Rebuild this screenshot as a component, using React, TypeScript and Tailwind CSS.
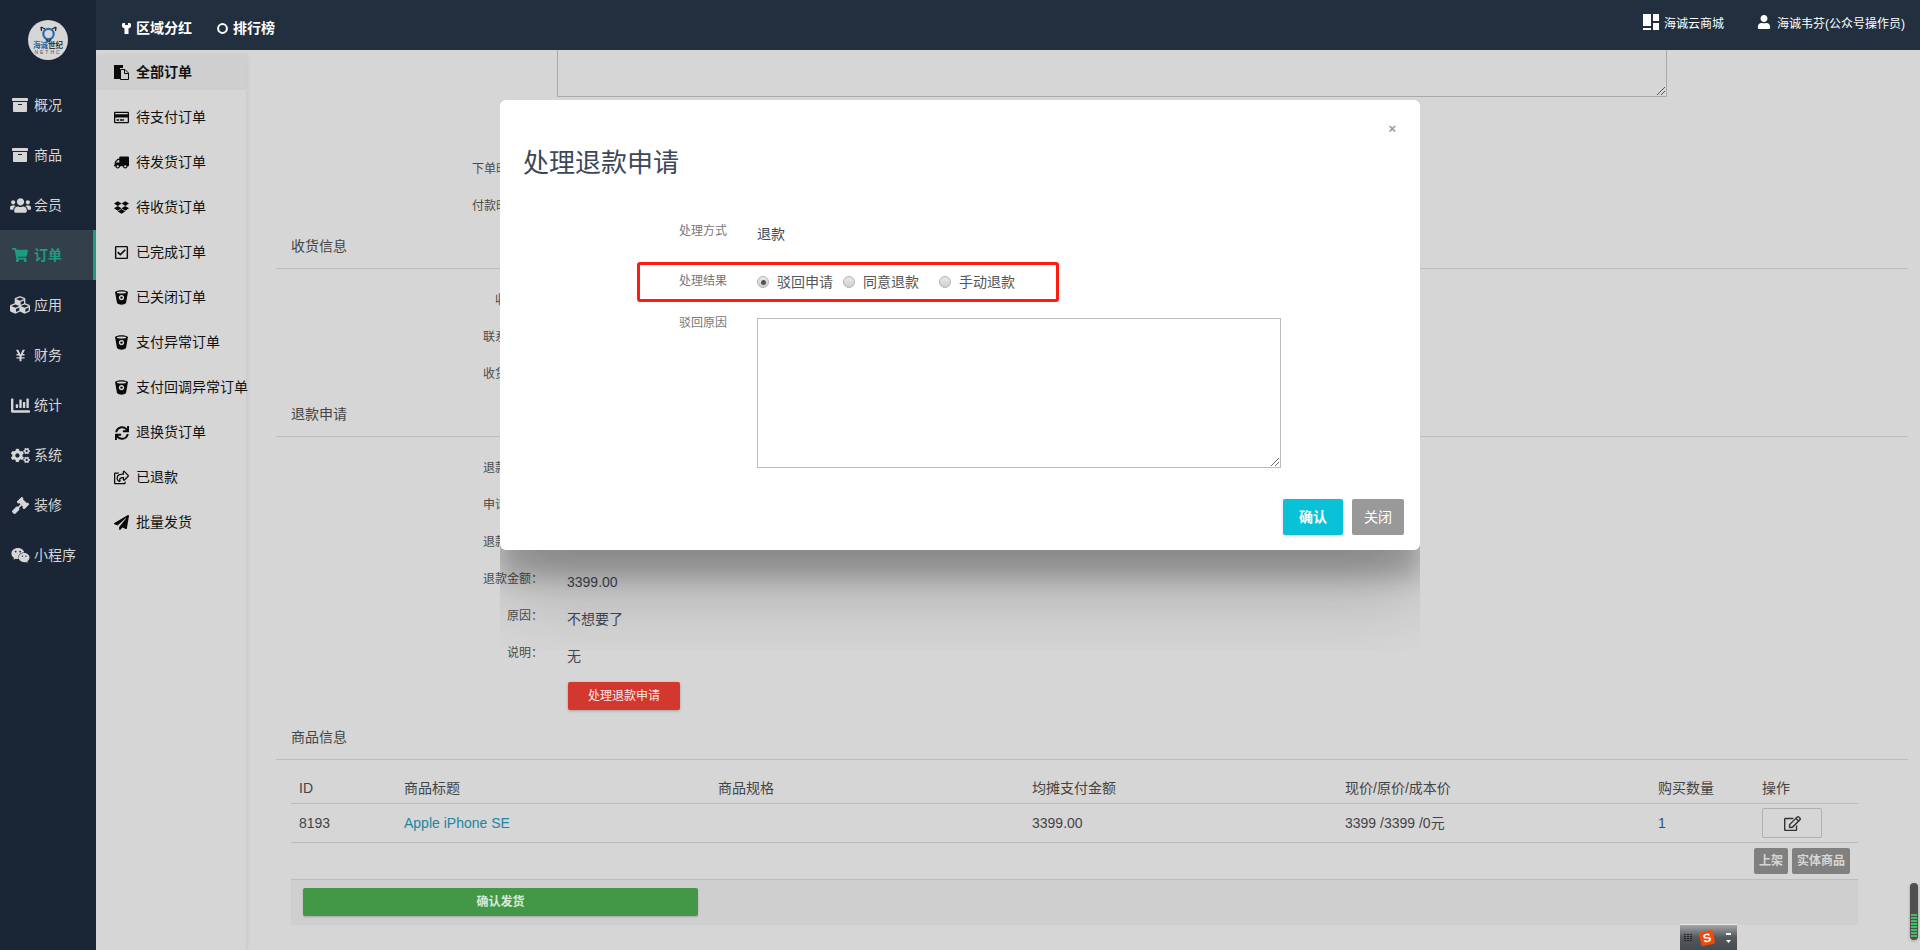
import React from "react";
import {
  FaArchive, FaUsers, FaShoppingCart, FaCubes, FaYenSign, FaChartBar, FaCogs, FaGavel, FaWeixin, FaUser,
  FaRegCreditCard, FaTruck, FaDropbox, FaRegCheckSquare, FaSync, FaRegShareSquare, FaPaperPlane, FaRegEdit,
} from "react-icons/fa";

const font = "font-['Liberation_Sans','Noto_Sans_CJK_SC',sans-serif]";

type IconType = React.ComponentType<{ size?: number; color?: string; className?: string }>;

function CopyIcon({ size = 15 }: { size?: number }) {
  return (
    <svg width={size} height={size} viewBox="0 0 15 15">
      <path d="M0 0 H9 V3 H6 V14 H0 Z" fill="#0a0a0a" />
      <path d="M6.5 4.5 H11 L14.5 8 V14.5 H6.5 Z" fill="none" stroke="#0a0a0a" strokeWidth="1" />
      <path d="M10.5 4.5 V8.5 H14.5" fill="none" stroke="#0a0a0a" strokeWidth="1" />
    </svg>
  );
}

function BucketIcon({ size = 15 }: { size?: number }) {
  return (
    <svg width={size} height={size} viewBox="0 0 14 15">
      <path d="M0.5 2 C3 -0.2 11 -0.2 13.5 2 L11.5 13 C9.5 15.3 4.5 15.3 2.5 13 Z" fill="#0a0a0a" />
      <ellipse cx="7" cy="2.6" rx="4.6" ry="1" fill="#d6d6d6" />
      <circle cx="7" cy="7.6" r="2.6" fill="#d6d6d6" />
      <circle cx="7" cy="7.6" r="1.2" fill="#0a0a0a" />
    </svg>
  );
}

function FlippedTruck({ size = 15 }: { size?: number }) {
  return <FaTruck size={size} color="#0a0a0a" className="-scale-x-100" />;
}

function SmallSync({ color }: { size?: number; color?: string }) {
  return <FaSync size={14} color={color} />;
}

const mainNav: [IconType, string, number][] = [
  [FaArchive, "概况", 16], [FaArchive, "商品", 16], [FaUsers, "会员", 21], [FaShoppingCart, "订单", 16], [FaCubes, "应用", 20],
  [FaYenSign, "财务", 13], [FaChartBar, "统计", 19], [FaCogs, "系统", 19], [FaGavel, "装修", 17], [FaWeixin, "小程序", 19],
];

const subNav: [IconType, string][] = [
  [CopyIcon, "全部订单"], [FaRegCreditCard, "待支付订单"], [FlippedTruck, "待发货订单"], [FaDropbox, "待收货订单"],
  [FaRegCheckSquare, "已完成订单"], [BucketIcon, "已关闭订单"], [BucketIcon, "支付异常订单"], [BucketIcon, "支付回调异常订单"],
  [SmallSync, "退换货订单"], [FaRegShareSquare, "已退款"], [FaPaperPlane, "批量发货"],
];

function Logo() {
  return (
    <div className="w-10 h-10 rounded-full bg-[#d6d6d6] flex flex-col items-center overflow-hidden">
      <svg width="17" height="16" viewBox="0 0 17 16" className="mt-[6px] shrink-0">
        <circle cx="8.5" cy="8" r="5.2" fill="none" stroke="#2a6db0" strokeWidth="2.2" />
        <path d="M1 1 L5 3 M16 1 L12 3 M1 1 L1.5 5 M16 1 L15.5 5 M8.5 15.5 L6 13.5 M8.5 15.5 L11 13.5" stroke="#222" strokeWidth="1.3" fill="none" />
      </svg>
      <div className="text-[7.5px] leading-[8px] font-bold whitespace-nowrap">
        <span className="text-[#2a5f99]">海诚</span><span className="text-[#333]">世纪</span>
      </div>
      <div className="text-[5px] leading-[5px] tracking-[2px] text-[#555] whitespace-nowrap">NETHC</div>
    </div>
  );
}

function Sidebar() {
  return (
    <aside className="w-[96px] shrink-0 h-full bg-[#1a2535] flex flex-col items-center">
      <div className="h-[80px] pt-5 shrink-0"><Logo /></div>
      <nav className="w-full">
        {mainNav.map(([Icon, label, size], i) => {
          const active = i === 3;
          return (
            <div key={label} className={`h-[50px] flex items-center pl-[8px] text-[14px] ${active ? "bg-[#343f4c] text-[#1f9b80] border-r-[3px] border-[#1f9b80] font-bold" : "text-[#d6d6d6]"}`}>
              <span className="w-[24px] flex justify-center"><Icon size={size} /></span>
              <span className="ml-[2px]">{label}</span>
            </div>
          );
        })}
      </nav>
    </aside>
  );
}

function SubNav() {
  return (
    <aside className="w-[150px] shrink-0 mt-[5px] bg-[#d6d6d6] shadow-[2px_0_4px_rgba(0,0,0,0.06)] flex flex-col text-[14px] text-[#111]">
      {subNav.map(([Icon, label], i) => (
        <div key={label} className={`flex items-center pl-[18px] whitespace-nowrap ${i === 0 ? "h-[35px] bg-[#cfcfcf] font-bold mb-[5px]" : "h-[45px]"}`}>
          <span className="w-[15px] flex justify-center mr-[7px]"><Icon size={15} color="#0a0a0a" /></span>
          {label}
        </div>
      ))}
    </aside>
  );
}

function SectionTitle({ children }: { children: React.ReactNode }) {
  return <div className="h-[45px] border-b border-[#bcbcbc] pl-[15px] flex items-center text-[14px] text-[#444]">{children}</div>;
}

function LabelRow({ pl, label, value }: { pl: number; label: string; value?: string }) {
  return (
    <div className="h-[37px] flex items-center" style={{ paddingLeft: pl }}>
      {label}
      {value && <span className="ml-[24px] mt-[8px] text-[14px] text-[#3e4656]">{value}</span>}
    </div>
  );
}

function Main() {
  const cols = "grid grid-cols-[113px_314px_314px_313px_313px_104px_96px]";
  return (
    <main className="flex-1 min-w-0 h-full flex flex-col">
      <div className="h-[47px] shrink-0 pl-[311px]">
        <div className="relative w-[1110px] h-full border-x border-b border-[#a9a9a9]">
          <svg width="12" height="12" viewBox="0 0 12 12" className="absolute right-0 bottom-0">
            <path d="M3 11 L11 3 M7 11 L11 7" stroke="#555" strokeWidth="1" />
          </svg>
        </div>
      </div>
      <div className="pl-[30px] pr-[12px] pt-[53px]">
        <div className="text-[12px] text-[#4a4a4a]">
          <LabelRow pl={196} label="下单时间" />
          <LabelRow pl={196} label="付款时间" />
        </div>
        <SectionTitle>收货信息</SectionTitle>
        <div className="h-[123px] pt-[12px] text-[12px] text-[#4a4a4a]">
          <LabelRow pl={219} label="收货人" />
          <LabelRow pl={207} label="联系电话" />
          <LabelRow pl={207} label="收货地址" />
        </div>
        <SectionTitle>退款申请</SectionTitle>
        <div className="pt-[12px] text-[12px] text-[#4a4a4a]">
          <LabelRow pl={207} label="退款编号" />
          <LabelRow pl={207} label="申请时间" />
          <LabelRow pl={207} label="退款方式" />
          <LabelRow pl={207} label="退款金额：" value="3399.00" />
          <LabelRow pl={231} label="原因：" value="不想要了" />
          <LabelRow pl={231} label="说明：" value="无" />
          <div className="pl-[292px] pt-[11px]">
            <button className="block w-[112px] h-[28px] rounded-[2px] bg-[#d3382e] text-white/90 text-[12px] shadow-[0_1px_3px_rgba(0,0,0,0.25)]">处理退款申请</button>
          </div>
        </div>
        <div className="mt-[5px]"><SectionTitle>商品信息</SectionTitle></div>
        <div className="ml-[15px] w-[1567px] text-[14px] text-[#444]">
          <div className={`${cols} h-[44px] border-b border-[#bcbcbc] items-end pb-[4px]`}>
            <div className="pl-[8px]">ID</div><div>商品标题</div><div>商品规格</div><div>均摊支付金额</div><div>现价/原价/成本价</div><div>购买数量</div><div>操作</div>
          </div>
          <div className={`${cols} h-[39px] border-b border-[#bcbcbc] items-center`}>
            <div className="pl-[8px]">8193</div><div className="text-[#22859f]">Apple iPhone SE</div><div /><div>3399.00</div><div>3399 /3399 /0元</div><div className="text-[#33506f]">1</div>
            <div>
              <div className="w-[60px] h-[30px] border border-[#b0b0b0] rounded-[2px] flex items-center justify-center"><FaRegEdit size={17} color="#333" /></div>
            </div>
          </div>
          <div className="h-[37px] border-b border-[#bcbcbc] flex justify-end items-center gap-[4px] pr-[8px]">
            <span className="h-[26px] w-[34px] rounded-[2px] bg-[#808080] text-[#d6d6d6] text-[12px] font-bold flex items-center justify-center">上架</span>
            <span className="h-[26px] w-[58px] rounded-[2px] bg-[#808080] text-[#d6d6d6] text-[12px] font-bold flex items-center justify-center">实体商品</span>
          </div>
          <div className="h-[45px] bg-[#cfcfcf] pl-[12px] pt-[8px]">
            <button className="block w-[395px] h-[28px] rounded-[2px] bg-[#429846] text-white/80 text-[12px] font-bold shadow-[0_1px_2px_rgba(0,0,0,0.2)]">确认发货</button>
          </div>
        </div>
      </div>
    </main>
  );
}

function Radio({ label, checked, w }: { label: string; checked?: boolean; w: number }) {
  return (
    <label className="flex items-center" style={{ width: w }}>
      <span className="w-[12px] h-[12px] rounded-full border border-[#b4b4b4] bg-gradient-to-b from-[#e8e8e8] to-[#d0d0d0] flex items-center justify-center mr-[8px] shrink-0">
        {checked && <span className="w-[5px] h-[5px] rounded-full bg-[#555]" />}
      </span>
      <span className="text-[14px] text-[#555] whitespace-nowrap">{label}</span>
    </label>
  );
}

function Modal() {
  return (
    <div className="absolute left-[500px] top-[100px] w-[920px] h-[550px] overflow-hidden z-10">
      <div className="relative h-[450px] bg-white rounded-[6px] flex flex-col shadow-[0_27px_24px_0_rgba(0,0,0,0.2),0_40px_77px_0_rgba(0,0,0,0.22)]">
        <div className="relative h-[120px] shrink-0 pl-[23px] pt-[47px] text-[26px] leading-[32px] text-[#3c4858]">
          处理退款申请
          <span className="absolute right-[24px] top-[22px] text-[13px] leading-[13px] font-bold text-[#999]">×</span>
        </div>
        <div className="flex h-[42px] items-start">
          <div className="w-[227px] text-right text-[12px] leading-[22px] text-[#777]">处理方式</div>
          <div className="ml-[30px] pt-[3px] text-[14px] leading-[22px] text-[#3c4858]">退款</div>
        </div>
        <div className="ml-[137px] w-[422px] h-[40px] border-[3px] border-[#ff1a12] rounded-[3px] flex items-center shrink-0">
          <div className="w-[87px] text-right text-[12px] text-[#777] -mt-[2px] whitespace-nowrap">处理结果</div>
          <div className="ml-[30px] flex items-center">
            <Radio label="驳回申请" checked w={86} />
            <Radio label="同意退款" w={96} />
            <Radio label="手动退款" w={70} />
          </div>
        </div>
        <div className="flex mt-[16px]">
          <div className="w-[227px] text-right text-[12px] leading-[20px] text-[#777] -mt-[5px]">驳回原因</div>
          <div className="relative ml-[30px] w-[524px] h-[150px] border border-[#bcbcbc]">
            <svg width="12" height="12" viewBox="0 0 12 12" className="absolute right-0 bottom-0">
              <path d="M3 11 L11 3 M7 11 L11 7" stroke="#666" strokeWidth="1" />
            </svg>
          </div>
        </div>
        <div className="flex justify-end gap-[9px] pr-[16px] mt-[31px]">
          <button className="w-[60px] h-[36px] rounded-[2px] bg-[#0ac2d8] text-white text-[14px] font-bold shadow-[0_1px_3px_rgba(200,80,220,0.35)]">确认</button>
          <button className="w-[52px] h-[36px] rounded-[2px] bg-[#999999] text-white text-[14px]">关闭</button>
        </div>
      </div>
    </div>
  );
}

function Sogou() {
  return (
    <div className="absolute left-[1680px] top-[924px] w-[57px] h-[26px] z-20 bg-gradient-to-b from-[#a4a8aa] via-[#53585c] to-[#464b4f] border-t border-[#e8e8e8] flex items-center pl-[4px]">
      <div className="grid grid-cols-3 gap-[1px] w-[8px]">
        {Array.from({ length: 12 }).map((_, i) => <span key={i} className="w-[2px] h-[1px] bg-[#222]" />)}
      </div>
      <span className="ml-[8px] w-[14px] h-[14px] bg-[#f04a0a] rounded-[2px] text-white text-[12px] leading-[14px] font-bold text-center -rotate-12">S</span>
      <div className="ml-[12px] flex flex-col items-center gap-[5px]">
        <span className="w-[5px] h-[2px] bg-white" />
        <svg width="5" height="3" viewBox="0 0 5 3"><path d="M0 0 H5 L2.5 3 Z" fill="#fff" /></svg>
      </div>
    </div>
  );
}

export default function App() {
  return (
    <div className={`${font} relative w-[1920px] h-[950px] overflow-hidden flex bg-[#d6d6d6]`}>
      <Sidebar />
      <div className="flex-1 min-w-0 flex flex-col">
        <header className="h-[50px] shrink-0 bg-[#212f3f] flex items-center text-white">
          <div className="flex items-center font-bold text-[14px] mt-[6px] ml-[26px]">
            <svg width="9" height="11" viewBox="0 0 9 11" className="mr-[5px]">
              <path d="M1 0 H3 V2 H6 V0 H8 L9 1 V4 L6.5 5.5 V11 H2.5 V5.5 L0 4 V1 Z" fill="#fff" />
            </svg>
            区域分红
            <svg width="11" height="11" viewBox="0 0 11 11" className="ml-[25px] mr-[5px]">
              <circle cx="5.5" cy="5.5" r="4.4" fill="none" stroke="#fff" strokeWidth="2" />
            </svg>
            排行榜
          </div>
          <div className="ml-auto flex items-center text-[12px] -mt-[2px] pr-[15px]">
            <svg width="16" height="16" viewBox="0 0 16 16" className="mr-[5px] -mt-[4px]">
              <path d="M0 0 H8 V12 H0 Z M0 14 H8 V16 H0 Z M10 0 H16 V7 H10 Z M10 9 H16 V16 H10 Z" fill="#fff" />
            </svg>
            海诚云商城
            <FaUser size={14} className="ml-[33px] mr-[6px] -mt-[4px]" />
            海诚韦芬(公众号操作员)
          </div>
        </header>
        <div className="flex-1 min-h-0 flex">
          <SubNav />
          <Main />
        </div>
      </div>
      <Modal />
      <Sogou />
      <div className="absolute left-[1910px] top-[883px] w-[8px] h-[57px] rounded-full bg-[#4d4f50] overflow-hidden z-20 flex flex-col justify-end items-center pb-[2px] shadow-[0_1px_3px_rgba(0,0,0,0.25)]">
        <div className="w-[6px] h-[24px] bg-[repeating-linear-gradient(to_bottom,#3fbf5f_0,#3fbf5f_2px,#4d4f50_2px,#4d4f50_3px)]" />
      </div>
    </div>
  );
}
